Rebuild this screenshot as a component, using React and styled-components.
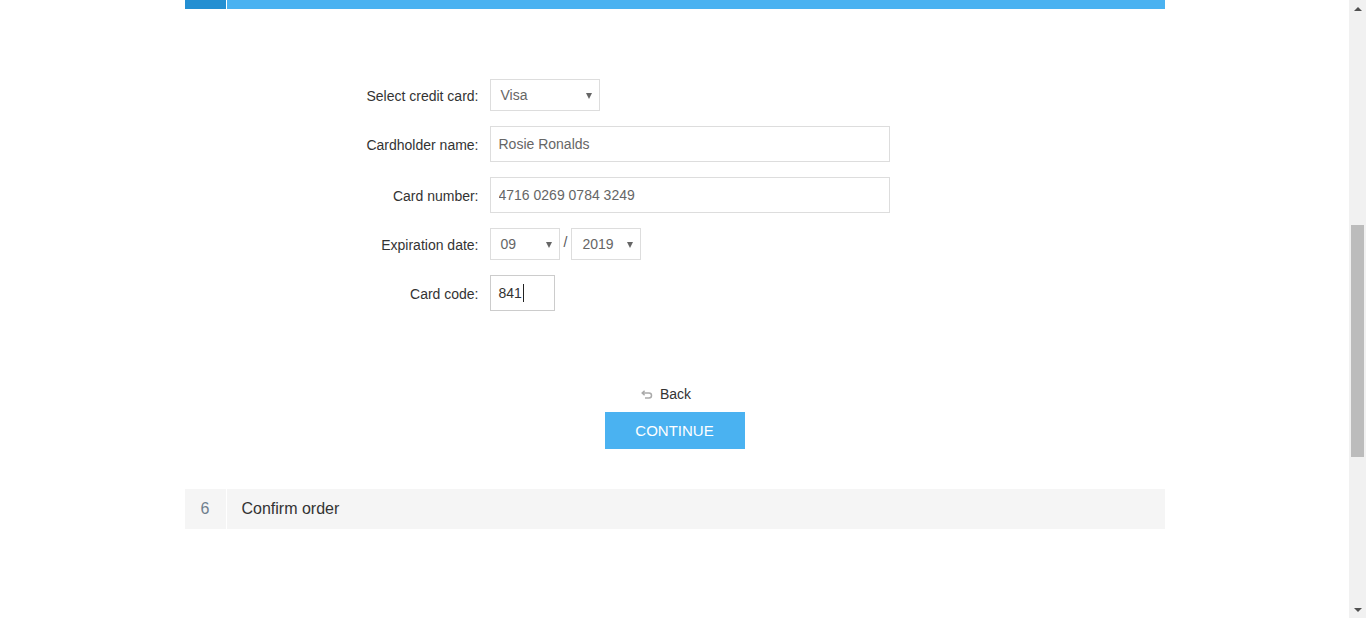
import styled, { createGlobalStyle } from "styled-components"

const GlobalStyle = createGlobalStyle`
    html, body {
        margin: 0;
        padding: 0;
        background: #fff;
        font-family: "Liberation Sans", Arial, sans-serif;
        color: #333;
        overflow: hidden;
    }
`

const Page = styled.div`
    display: flex;
    height: 100vh;
`

const Main = styled.div`
    flex: 1;
    display: flex;
    justify-content: center;
`

const Column = styled.div`
    width: 980px;
    display: flex;
    flex-direction: column;
`

const StepBar = styled.div`
    display: flex;
    height: 40px;
    background: ${p => p.active ? "#4ab2f1" : "#f5f5f5"};
    ${p => p.active && "height: 9px;"}
`

const StepNum = styled.div`
    width: 41px;
    border-right: 1px solid #fff;
    display: flex;
    align-items: center;
    justify-content: center;
    font-size: 16px;
    color: #6f7f8e;
    background: ${p => p.active ? "#248fd2" : "transparent"};
`

const StepTitle = styled.div`
    display: flex;
    align-items: center;
    padding-left: 15px;
    font-size: 16px;
    color: #333;
`

const Form = styled.div`
    display: grid;
    grid-template-columns: 294px auto;
    column-gap: 11px;
    row-gap: 15px;
    align-items: center;
    margin-top: 70px;
`

const Label = styled.label`
    text-align: right;
    font-size: 14px;
    color: #333;
    padding-top: 2px;
`

const Field = styled.div`
    display: flex;
    align-items: center;
`

const Input = styled.input`
    box-sizing: border-box;
    width: ${p => p.w}px;
    height: 36px;
    border: 1px solid #ddd;
    padding: 0 8px;
    font-family: inherit;
    font-size: 14px;
    color: #666;
    outline: none;
    background: #fff;
`

const Caret = styled.span`
    display: inline-block;
    width: 1px;
    height: 18px;
    background: #222;
    margin-left: 1px;
`

const CodeBox = styled.div`
    box-sizing: border-box;
    width: 65px;
    height: 36px;
    border: 1px solid #ccc;
    padding: 0 8px;
    display: flex;
    align-items: center;
    font-size: 14px;
    color: #333;
`

const SelectBox = styled.div`
    position: relative;
    box-sizing: border-box;
    width: ${p => p.w}px;
    height: 32px;
    border: 1px solid #ddd;
    display: flex;
    align-items: center;
    padding-left: 10px;
    font-size: 14px;
    color: #666;

    &::after {
        content: "";
        position: absolute;
        right: 7px;
        top: 13px;
        border-left: 3px solid transparent;
        border-right: 3px solid transparent;
        border-top: 6px solid #666;
    }
`

const Slash = styled.span`
    font-size: 14px;
    color: #555;
    margin: 0 4px 0 4px;
    position: relative;
    top: -2px;
`

const Actions = styled.div`
    display: flex;
    flex-direction: column;
    align-items: center;
    margin-top: 74px;
`

const BackLink = styled.a`
    display: flex;
    align-items: center;
    gap: 7px;
    font-size: 14px;
    color: #333;
    text-decoration: none;
    height: 18px;
    margin-bottom: 9px;
    margin-right: 17px;
    cursor: pointer;
`

const BackIcon = () => (
    <svg width="12" height="9" viewBox="0 0 12 9" fill="none" stroke="#aaa" strokeWidth="1.5">
        <path d="M3.6 0.8 L1.2 3 L3.6 5.2 M1.2 3 H8 a2.5 2.5 0 0 1 0 5 H4" />
    </svg>
)

const Button = styled.button`
    width: 140px;
    height: 37px;
    border: none;
    background: #4ab2f1;
    color: #fff;
    font-family: inherit;
    font-size: 15px;
    text-transform: uppercase;
    cursor: pointer;
`

const Spacer = styled.div`
    height: 40px;
`

const Scrollbar = styled.div`
    width: 17px;
    background: #f1f1f1;
    display: flex;
    flex-direction: column;
    align-items: center;
`

const Arrow = styled.div`
    height: 17px;
    display: flex;
    align-items: center;
    justify-content: center;

    &::before {
        content: "";
        border-left: 4px solid transparent;
        border-right: 4px solid transparent;
        ${p => p.down ? "border-top: 4px solid #505050;" : "border-bottom: 4px solid #505050;"}
    }
`

const Track = styled.div`
    flex: 1;
    display: flex;
    flex-direction: column;
    align-items: center;
    padding-top: 208px;
`

const Thumb = styled.div`
    width: 13px;
    height: 232px;
    background: #bcbcbc;
`

function App() {
    return (
        <Page>
            <GlobalStyle />
            <Main>
                <Column>
                    <StepBar active>
                        <StepNum active />
                    </StepBar>
                    <Form>
                        <Label>Select credit card:</Label>
                        <Field>
                            <SelectBox w={110}>Visa</SelectBox>
                        </Field>
                        <Label>Cardholder name:</Label>
                        <Field>
                            <Input w={400} defaultValue="Rosie Ronalds" />
                        </Field>
                        <Label>Card number:</Label>
                        <Field>
                            <Input w={400} defaultValue="4716 0269 0784 3249" />
                        </Field>
                        <Label>Expiration date:</Label>
                        <Field>
                            <SelectBox w={70}>09</SelectBox>
                            <Slash>/</Slash>
                            <SelectBox w={70}>2019</SelectBox>
                        </Field>
                        <Label>Card code:</Label>
                        <Field>
                            <CodeBox>841<Caret /></CodeBox>
                        </Field>
                    </Form>
                    <Actions>
                        <BackLink>
                            <BackIcon />
                            Back
                        </BackLink>
                        <Button>Continue</Button>
                    </Actions>
                    <Spacer />
                    <StepBar>
                        <StepNum>6</StepNum>
                        <StepTitle>Confirm order</StepTitle>
                    </StepBar>
                </Column>
            </Main>
            <Scrollbar>
                <Arrow />
                <Track>
                    <Thumb />
                </Track>
                <Arrow down />
            </Scrollbar>
        </Page>
    )
}

export default App
